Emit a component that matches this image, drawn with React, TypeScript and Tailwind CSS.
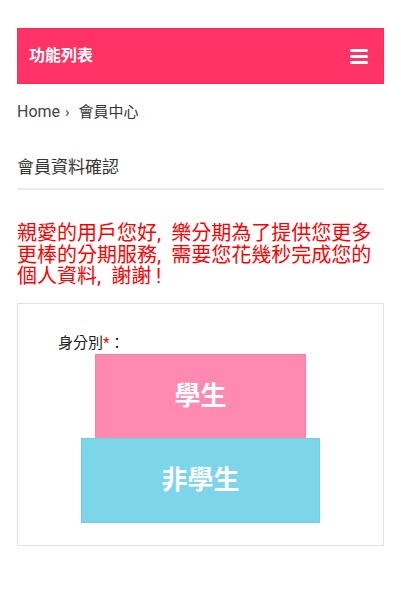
import { useState } from 'react'

const font = { fontFamily: 'Roboto, "Noto Sans CJK TC", sans-serif' }

export default function App() {
  const [identity, setIdentity] = useState('')

  return (
    <div className="w-[401px] min-h-[600px] bg-white pt-[28px] px-[17px]" style={font}>
      <header className="flex h-[56px] items-center justify-between border border-[#ff2a5c] bg-[#ff3366] pl-[11px] pr-[15px]">
        <span className="text-[16px] font-bold text-white">功能列表</span>
        <div className="flex w-[18px] flex-col gap-[3px]">
          <span className="h-[3px] w-full rounded-sm bg-white" />
          <span className="h-[3px] w-full rounded-sm bg-white" />
          <span className="h-[3px] w-full rounded-sm bg-white" />
        </div>
      </header>

      <nav className="mt-[17px] flex items-center text-[16px] leading-[22px] text-[#333]">
        <span className="text-[#444]">Home</span>
        <span className="ml-[5px] mr-[9px] text-[15px] text-[#444]">›</span>
        <span className="text-[15px]">會員中心</span>
      </nav>

      <h2 className="mt-[32px] border-b-2 border-[#ececec] pb-[9px] text-[17px] leading-[24px] text-[#333]">
        會員資料確認
      </h2>

      <p className="mt-[33px] text-[20px] leading-[21.5px] text-[#ff0000]">
        {'親愛的用戶您好,\u2002樂分期為了提供您更多更棒的分期服務,\u2002需要您花幾秒完成您的個人資料,\u2002謝謝 !'}
      </p>

      <section className="mt-[15px] border border-[#e2e2e2] px-[40px] pt-[28px] pb-[22px]">
        <label className="block text-[15px] leading-[22px] text-[#222]">
          身分別<span className="text-[#ff0000]">*</span>：
        </label>
        <div className="flex flex-col items-center">
          <button
            onClick={() => setIdentity('student')}
            className="flex h-[85px] w-[211px] items-center justify-center border border-[#ff7fa9] bg-[#ff89b0] text-[26px] font-bold text-white"
          >
            學生
          </button>
          <button
            onClick={() => setIdentity('other')}
            className="-mt-[1px] flex h-[85px] w-[239px] items-center justify-center border border-[#6fcfe6] bg-[#7dd5ea] text-[26px] font-bold text-white"
          >
            非學生
          </button>
        </div>
        {identity && <input type="hidden" value={identity} />}
      </section>
    </div>
  )
}
